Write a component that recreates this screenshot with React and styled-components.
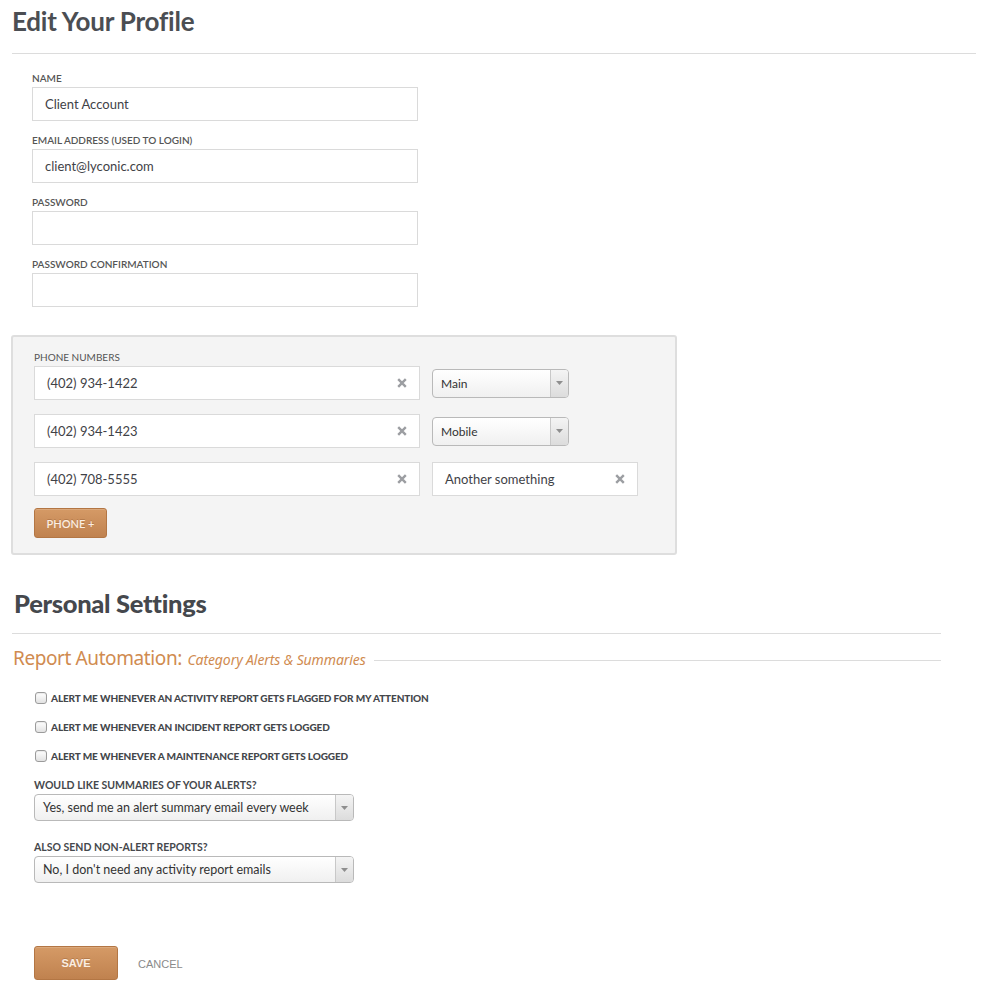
import React from "react";
import styled, { createGlobalStyle } from "styled-components";

const Global = createGlobalStyle`
  html, body { margin: 0; padding: 0; background: #fff; }
  body { font-family: Lato, "Open Sans", sans-serif; color: #4a4d52; }
  * { box-sizing: border-box; }
`;

const Page = styled.div`
  padding: 0 8px 0 12px;
  width: 984px;
`;

const TitleBar = styled.div`
  border-bottom: 1px solid #dcdcdc;
  height: 54px;
  padding-top: 6px;
`;

const PageTitle = styled.h1`
  margin: 0;
  font-size: 26px;
  line-height: 30px;
  font-weight: 700;
  color: #4b4e53;
  letter-spacing: -0.2px;
`;

const ProfileForm = styled.div`
  padding: 18px 0 0 20px;
  display: flex;
  flex-direction: column;
  gap: 13px;
`;

const Field = styled.div`
  display: flex;
  flex-direction: column;
  gap: 3px;
`;

const Label = styled.div`
  font-size: ${(p) => (p.$bold ? 10.5 : 10)}px;
  line-height: 12px;
  font-weight: ${(p) => (p.$light ? 400 : p.$bold ? 700 : 600)};
  color: ${(p) => (p.$bold ? "#45484c" : "#555")};
  text-transform: uppercase;
  letter-spacing: 0;
`;

const TextBox = styled.div`
  width: ${(p) => p.$w || 386}px;
  height: 34px;
  border: 1px solid #dadada;
  background: #fff;
  display: flex;
  align-items: center;
  padding: 0 12px;
  font-size: 13px;
  color: #3f4247;
`;

const BoxValue = styled.span`
  flex: 1;
`;

const PhoneBox = styled.div`
  margin: 28px 0 0 -1px;
  width: 666px;
  background: #f4f4f4;
  border: 2px solid #dedede;
  border-radius: 3px;
  padding: 14px 0 15px 21px;
  display: flex;
  flex-direction: column;
  align-items: flex-start;
`;

const PhoneList = styled.div`
  display: flex;
  flex-direction: column;
  gap: 14px;
  margin-top: 3px;
  margin-bottom: 12px;
`;

const PhoneRow = styled.div`
  display: flex;
  align-items: center;
  gap: 12px;
`;

const Dropdown = styled.div`
  width: ${(p) => p.$w}px;
  height: ${(p) => p.$h || 29}px;
  border: 1px solid #b9b9b9;
  border-radius: 4px;
  background: linear-gradient(#ffffff, #f0f0f0);
  display: flex;
  align-items: stretch;
  font-size: ${(p) => p.$fs || 12}px;
  color: #333;
  overflow: hidden;
`;

const DropdownText = styled.span`
  flex: 1;
  display: flex;
  align-items: center;
  padding-left: ${(p) => p.$pl || 8}px;
`;

const DropdownArrow = styled.span`
  width: 18px;
  border-left: 1px solid #c8c8c8;
  background: linear-gradient(#f4f4f4, #dcdcdc);
  display: flex;
  align-items: center;
  justify-content: center;
`;

const OrangeButton = styled.button`
  height: ${(p) => p.$h}px;
  width: ${(p) => p.$w}px;
  border: 1px solid #b37644;
  border-radius: 3px;
  background: linear-gradient(#d59a66, #c0824f);
  color: #fbeee2;
  font-family: ${(p) => (p.$arial ? '"Liberation Sans", Arial, sans-serif' : 'Lato, sans-serif')};
  font-size: ${(p) => p.$fs}px;
  font-weight: ${(p) => p.$fw};
  text-transform: uppercase;
  padding: 0;
  box-shadow: inset 0 1px 0 rgba(255,255,255,0.15);
  text-shadow: 0 -1px 0 rgba(120,70,30,0.3);
  cursor: pointer;
`;

const SectionTitle = styled.h2`
  margin: 33px 0 0 2px;
  font-size: 25.5px;
  line-height: 30px;
  font-weight: 900;
  color: #45484d;
  letter-spacing: -0.3px;
`;

const Section = styled.div`
  width: 929px;
`;

const SectionRule = styled.div`
  border-top: 1px solid #dcdcdc;
  margin-top: 15px;
`;

const SubHeader = styled.div`
  display: flex;
  align-items: center;
  margin-top: 13px;
  margin-left: 1px;
  gap: 8px;
`;

const SubTitle = styled.span`
  font-family: "Noto Sans", sans-serif;
  font-size: 19px;
  line-height: 22px;
  color: #d08b50;
  letter-spacing: -0.4px;
  white-space: nowrap;
`;

const SubTitleNote = styled.span`
  font-style: italic;
  font-size: 14px;
  margin-left: 2px;
  letter-spacing: -0.1px;
`;

const SubRule = styled.span`
  flex: 1;
  border-top: 1px solid #dcdcdc;
  margin-top: 2px;
`;

const Settings = styled.div`
  padding: 12px 0 0 22px;
  display: flex;
  flex-direction: column;
`;

const CheckRow = styled.label`
  display: flex;
  align-items: center;
  gap: 4px;
  height: 29px;
  margin-left: 1px;
`;

const CheckBox = styled.span`
  width: 12px;
  height: 12px;
  border: 1px solid #9b9b9b;
  border-radius: 3px;
  background: linear-gradient(#ffffff, #e2e2e2);
  box-shadow: inset 0 1px 1px rgba(0,0,0,0.08);
`;

const CheckText = styled.span`
  font-size: 10px;
  font-weight: 900;
  color: #44474b;
  text-transform: uppercase;
  letter-spacing: -0.12px;
`;

const SelectField = styled.div`
  display: flex;
  flex-direction: column;
  gap: 3px;
  margin-top: ${(p) => p.$mt}px;
`;

const Actions = styled.div`
  display: flex;
  align-items: center;
  gap: 20px;
  margin-top: 63px;
  padding-left: 22px;
`;

const CancelLink = styled.a`
  font-family: "Liberation Sans", Arial, sans-serif;
  font-size: 11px;
  color: #8a8a8a;
  text-transform: uppercase;
  text-decoration: none;
  margin-top: 1px;
`;

const CloseIcon = () => (
  <svg width="10" height="10" viewBox="0 0 10 10">
    <path d="M1.2 1.2 L8.8 8.8 M8.8 1.2 L1.2 8.8" stroke="#9c9ea2" strokeWidth="2.4" strokeLinecap="butt" />
  </svg>
);

const Arrow = () => (
  <svg width="7" height="4" viewBox="0 0 7 4">
    <path d="M0 0 H7 L3.5 4 Z" fill="#8e8e8e" />
  </svg>
);

const Select = ({ w, h, fs, pl, children }) => (
  <Dropdown $w={w} $h={h} $fs={fs}>
    <DropdownText $pl={pl}>{children}</DropdownText>
    <DropdownArrow>
      <Arrow />
    </DropdownArrow>
  </Dropdown>
);

const fields = [
  { label: "Name", value: "Client Account" },
  { label: "Email Address (used to login)", value: "client@lyconic.com" },
  { label: "Password", value: "" },
  { label: "Password Confirmation", value: "" },
];

const phones = [
  { num: "(402) 934-1422", type: "Main" },
  { num: "(402) 934-1423", type: "Mobile" },
  { num: "(402) 708-5555", custom: "Another something" },
];

const alerts = [
  "Alert me whenever an activity report gets flagged for my attention",
  "Alert me whenever an incident report gets logged",
  "Alert me whenever a maintenance report gets logged",
];

export default function App() {
  return (
    <>
      <Global />
      <Page>
        <TitleBar>
          <PageTitle>Edit Your Profile</PageTitle>
        </TitleBar>
        <ProfileForm>
          {fields.map((f) => (
            <Field key={f.label}>
              <Label>{f.label}</Label>
              <TextBox>
                <BoxValue>{f.value}</BoxValue>
              </TextBox>
            </Field>
          ))}
        </ProfileForm>

        <PhoneBox>
          <Label $light>Phone Numbers</Label>
          <PhoneList>
            {phones.map((p) => (
              <PhoneRow key={p.num}>
                <TextBox>
                  <BoxValue>{p.num}</BoxValue>
                  <CloseIcon />
                </TextBox>
                {p.custom ? (
                  <TextBox $w={206}>
                    <BoxValue>{p.custom}</BoxValue>
                    <CloseIcon />
                  </TextBox>
                ) : (
                  <Select w={137}>{p.type}</Select>
                )}
              </PhoneRow>
            ))}
          </PhoneList>
          <OrangeButton $h={30} $w={73} $fs={11} $fw={600}>Phone +</OrangeButton>
        </PhoneBox>

        <Section>
          <SectionTitle>Personal Settings</SectionTitle>
          <SectionRule />
          <SubHeader>
            <SubTitle>
              Report Automation:<SubTitleNote> Category Alerts &amp; Summaries</SubTitleNote>
            </SubTitle>
            <SubRule />
          </SubHeader>
        </Section>

        <Settings>
          {alerts.map((a) => (
            <CheckRow key={a}>
              <CheckBox />
              <CheckText>{a}</CheckText>
            </CheckRow>
          ))}
          <SelectField $mt={9}>
            <Label $bold>Would like summaries of your alerts?</Label>
            <Select w={320} h={27} fs={12.5} pl={8}>Yes, send me an alert summary email every week</Select>
          </SelectField>
          <SelectField $mt={20}>
            <Label $bold>Also send non-alert reports?</Label>
            <Select w={320} h={27} fs={12.5} pl={8}>No, I don't need any activity report emails</Select>
          </SelectField>
        </Settings>

        <Actions>
          <OrangeButton $h={34} $w={84} $fs={11} $fw={700} $arial>Save</OrangeButton>
          <CancelLink href="#">Cancel</CancelLink>
        </Actions>
      </Page>
    </>
  );
}
